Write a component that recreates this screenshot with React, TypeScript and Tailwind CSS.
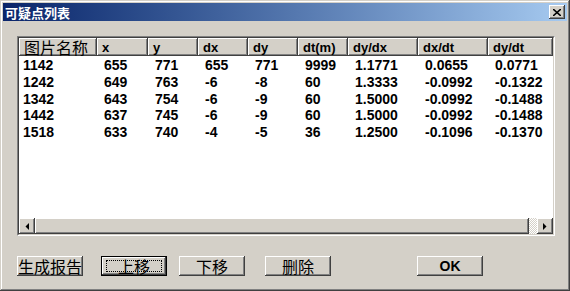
import React from "react";

// columns of the list view, widths read off the screenshot
const columns = [
  { title: "图片名称", width: 78, cjk: true },
  { title: "x", width: 51 },
  { title: "y", width: 50 },
  { title: "dx", width: 50 },
  { title: "dy", width: 50 },
  { title: "dt(m)", width: 50 },
  { title: "dy/dx", width: 70 },
  { title: "dx/dt", width: 70 },
  { title: "dy/dt", width: 65 },
];

const rows = [
  ["1142", "655", "771", "655", "771", "9999", "1.1771", "0.0655", "0.0771"],
  ["1242", "649", "763", "-6", "-8", "60", "1.3333", "-0.0992", "-0.1322"],
  ["1342", "643", "754", "-6", "-9", "60", "1.5000", "-0.0992", "-0.1488"],
  ["1442", "637", "745", "-6", "-9", "60", "1.5000", "-0.0992", "-0.1488"],
  ["1518", "633", "740", "-4", "-5", "36", "1.2500", "-0.1096", "-0.1370"],
];

const raised =
  "bg-[#d4d0c8] shadow-[inset_-1px_-1px_#404040,inset_1px_1px_#ffffff,inset_-2px_-2px_#808080]";

const cjk = { fontFamily: '"Noto Sans CJK SC", sans-serif' };
const latin = { fontFamily: '"Liberation Sans", Arial, sans-serif' };

const Arrow = ({ dir }: { dir: "left" | "right" }) => (
  <svg width="4" height="7" viewBox="0 0 4 7">
    {dir === "left" ? (
      <polygon points="4,0 4,7 0.5,3.5" fill="#000" />
    ) : (
      <polygon points="0,0 0,7 3.5,3.5" fill="#000" />
    )}
  </svg>
);

const Button = ({
  label,
  width,
  isDefault,
  bold,
}: {
  label: string;
  width: number;
  isDefault?: boolean;
  bold?: boolean;
}) => (
  <div
    className={`h-[20px] flex items-center justify-center ${
      isDefault ? "border border-black" : ""
    } ${raised}`}
    style={{ width }}
  >
    {isDefault ? (
      <div className="w-[calc(100%-8px)] h-[calc(100%-6px)] border border-dotted border-black flex items-center justify-center">
        <span className="text-[16px] leading-none text-black" style={cjk}>
          {label}
        </span>
      </div>
    ) : (
      <span
        className={`leading-none text-black ${bold ? "text-[14px] font-bold" : "text-[16px]"}`}
        style={bold ? latin : cjk}
      >
        {label}
      </span>
    )}
  </div>
);

export default function App() {
  return (
    <div className="w-[570px] h-[291px] bg-[#d4d0c8] p-[3px] flex flex-col shadow-[inset_-1px_-1px_#404040,inset_1px_1px_#d4d0c8,inset_-2px_-2px_#808080,inset_2px_2px_#ffffff]">
      {/* title bar */}
      <div className="h-[18px] flex items-center justify-between pl-[2px] pr-[2px] bg-gradient-to-r from-[#0a246a] to-[#a6caf0]">
        <span className="text-white font-bold text-[13px] leading-none" style={cjk}>
          可疑点列表
        </span>
        <div className={`w-[16px] h-[14px] flex items-center justify-center ${raised}`}>
          <svg width="8" height="7" viewBox="0 0 8 7">
            <path d="M0 0 L8 7 M8 0 L0 7" stroke="#000" strokeWidth="1.6" />
          </svg>
        </div>
      </div>

      {/* list view */}
      <div className="ml-[14px] mt-[15px] w-[538px] h-[200px] border-t border-l border-[#808080] border-r border-r-white border-b border-b-white">
        <div className="w-full h-full border-t border-l border-[#404040] border-r border-r-[#d4d0c8] border-b border-b-[#d4d0c8] bg-white flex flex-col">
          <div className="flex h-[18px] shrink-0">
            {columns.map((c) => (
              <div
                key={c.title}
                className={`h-full flex items-center pl-[5px] ${raised}`}
                style={{ width: c.width }}
              >
                <span
                  className={`leading-none text-black ${c.cjk ? "text-[16px]" : "text-[13px] font-bold"}`}
                  style={c.cjk ? cjk : latin}
                >
                  {c.title}
                </span>
              </div>
            ))}
          </div>
          <div className="flex-1 flex flex-col pt-[1px]">
            {rows.map((r, i) => (
              <div key={i} className="flex h-[16.7px]">
                {r.map((v, j) => (
                  <div
                    key={j}
                    className={`flex items-center ${j === 0 ? "pl-[4px]" : "pl-[7px]"}`}
                    style={{ width: columns[j].width }}
                  >
                    <span className="text-[14px] font-bold leading-none text-black" style={latin}>
                      {v}
                    </span>
                  </div>
                ))}
              </div>
            ))}
          </div>
          {/* horizontal scroll bar */}
          <div className="h-[16px] flex shrink-0">
            <div className={`w-[16px] h-full flex items-center justify-center ${raised}`}>
              <Arrow dir="left" />
            </div>
            <div className={`flex-1 h-full ${raised}`} />
            <div className="w-[8px] h-full bg-[repeating-conic-gradient(#ffffff_0_25%,#d4d0c8_0_50%)] bg-[length:2px_2px]" />
            <div className={`w-[16px] h-full flex items-center justify-center ${raised}`}>
              <Arrow dir="right" />
            </div>
          </div>
        </div>
      </div>

      {/* buttons */}
      <div className="flex items-center mt-[20px] ml-[14px]">
        <Button label="生成报告" width={66} />
        <div className="ml-[18px]">
          <Button label="上移" width={66} isDefault />
        </div>
        <div className="ml-[12px]">
          <Button label="下移" width={66} />
        </div>
        <div className="ml-[20px]">
          <Button label="删除" width={66} />
        </div>
        <div className="ml-[86px]">
          <Button label="OK" width={66} bold />
        </div>
      </div>
    </div>
  );
}
